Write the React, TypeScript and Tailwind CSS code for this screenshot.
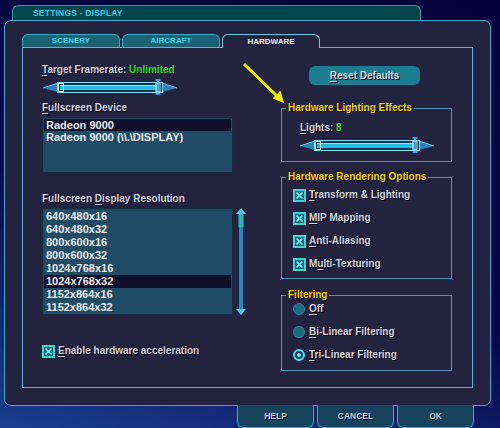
import React from 'react';

const shadow = '[text-shadow:1px_1px_0_#05051a]';

function U({ children }: { children: React.ReactNode }) {
  return <span className="underline underline-offset-[2px]">{children}</span>;
}

function Slider() {
  return (
    <svg width="134" height="16" viewBox="0 0 134 16">
      <polygon points="0,9 15,4 15,13" fill="#2c82b6" />
      <polyline points="0,9 15,4" stroke="#69c6ef" strokeWidth="1" fill="none" />
      <polygon points="134,9 119,4 119,13" fill="#2c82b6" />
      <polyline points="134,9 119,4" stroke="#69c6ef" strokeWidth="1" fill="none" />
      <rect x="14.5" y="3.5" width="105" height="10" fill="#0c3552" stroke="#86e0f2" />
      <rect x="17" y="6" width="99" height="5" fill="#28bedf" />
      <rect x="17" y="6" width="99" height="1" fill="#7fe6f6" />
      <rect x="15.5" y="4.5" width="5" height="8" fill="none" stroke="#c9f6ff" />
      <line x1="115" y1="0" x2="115" y2="16" stroke="#3e9fe6" strokeWidth="2" />
      <rect x="112.5" y="0" width="5" height="2" fill="#3e9fe6" />
      <rect x="112.5" y="14" width="5" height="2" fill="#3e9fe6" />
      <rect x="113" y="4" width="4" height="9" fill="none" stroke="#c9f6ff" />
    </svg>
  );
}

function Check({ children }: { children: React.ReactNode }) {
  return (
    <div className="flex items-center h-[14px] gap-[3px]">
      <span className="w-[13px] h-[13px] border-2 border-[#3fd6d0] bg-[#17607a] flex items-center justify-center">
        <svg width="7" height="7" viewBox="0 0 7 7">
          <path d="M0.5 0.5 L6.5 6.5 M6.5 0.5 L0.5 6.5" stroke="#62f2ea" strokeWidth="1.6" />
        </svg>
      </span>
      <span className={`text-[10px] font-bold leading-[12px] text-[#d4d4dc] ${shadow}`}>{children}</span>
    </div>
  );
}

function Radio({ on, children }: { on?: boolean; children: React.ReactNode }) {
  return (
    <div className="flex items-center h-[14px] gap-[4px]">
      {on ? (
        <span className="w-[12px] h-[12px] rounded-full border-2 border-[#49e3f0] bg-[#123a5a] flex items-center justify-center">
          <span className="w-[4px] h-[4px] rounded-full bg-[#64f2fa]" />
        </span>
      ) : (
        <span className="w-[12px] h-[12px] rounded-full bg-[#1b6a80] border border-[#2c8299]" />
      )}
      <span className={`text-[10px] font-bold leading-[12px] text-[#d4d4dc] ${shadow}`}>{children}</span>
    </div>
  );
}

function Group({ title, className, children }: { title: string; className: string; children: React.ReactNode }) {
  return (
    <div className={`relative border border-[#4e97b4] ${className}`}>
      <span className={`absolute -top-[7px] left-[4px] px-[2px] bg-[#24233f] text-[10px] font-bold leading-[12px] text-[#f2d400] ${shadow}`}>
        {title}
      </span>
      {children}
    </div>
  );
}

export default function App() {
  const resolutions = [
    '640x480x16',
    '640x480x32',
    '800x600x16',
    '800x600x32',
    '1024x768x16',
    '1024x768x32',
    '1152x864x16',
    '1152x864x32',
  ];

  return (
    <div className="relative w-[500px] h-[428px] overflow-hidden pt-[5px] font-['Liberation_Sans',Arial,sans-serif] bg-[linear-gradient(200deg,#04043a_0%,#07074a_55%,#1a3e8e_100%)]">
      {/* title tab */}
      <div className="ml-[12px] w-[409px] h-[15px] rounded-t-[6px] border-t border-x border-[#2a9ab0] bg-[#01464c] pl-[20px] flex items-center">
        <span className="text-[8.5px] font-bold text-[#33cde0] tracking-[0.2px]">SETTINGS - DISPLAY</span>
      </div>

      {/* main panel */}
      <div className="ml-[4px] w-[487px] h-[386px] rounded-[7px] border border-[#3aa8c8] bg-[#24233f] pt-[13px] pl-[17px]">
        <div className="flex gap-[2px] h-[13px]">
          <div className="w-[98px] h-[13px] rounded-t-[6px] border-t border-x border-[#3aa8c0] bg-[#1b6275] flex items-center justify-center">
            <span className="text-[8px] font-bold text-[#3fd0e0]">SCENERY</span>
          </div>
          <div className="w-[98px] h-[13px] rounded-t-[6px] border-t border-x border-[#3aa8c0] bg-[#1b6275] flex items-center justify-center">
            <span className="text-[8px] font-bold text-[#3fd0e0]">AIRCRAFT</span>
          </div>
          <div className="relative z-10 w-[98px] h-[14px] rounded-t-[6px] border-t border-x border-[#6cc8e0] bg-[#24233f] flex items-center justify-center">
            <span className="text-[8px] font-bold text-[#eeeef4]">HARDWARE</span>
          </div>
        </div>

        {/* tab content */}
        <div className="w-[451px] h-[341px] border border-[#55b8d8] flex pl-[19px]">
          {/* left column */}
          <div className="w-[214px] flex flex-col">
            <div className={`mt-[16px] text-[10px] font-bold leading-[12px] text-[#d4d4dc] ${shadow}`}>
              <U>T</U>arget Framerate: <span className="text-[#1fe31f]">Unlimited</span>
            </div>
            <div className="mt-[3px] ml-[1px] h-[16px]">
              <Slider />
            </div>
            <div className={`mt-[7px] text-[10px] font-bold leading-[12px] text-[#d4d4dc] ${shadow}`}>
              <U>F</U>ullscreen Device
            </div>
            <div className="mt-[3px] w-[191px] h-[56px] border border-[#142d40] bg-[#1f4b64] pt-[1px] text-[11px] font-bold leading-[12px] text-[#ececf2]">
              <div className="mx-[1px] px-[2px] bg-[#0f0f2c]">Radeon 9000</div>
              <div className="px-[3px]">{'Radeon 9000 (\\\\.\\DISPLAY)'}</div>
            </div>
            <div className={`mt-[20px] text-[10px] font-bold leading-[12px] text-[#d4d4dc] ${shadow}`}>
              Fullscreen <U>D</U>isplay Resolution
            </div>
            <div className="mt-[3px] flex">
              <div className="w-[191px] h-[107px] border border-[#142d40] bg-[#1f4b64] pt-[1px] text-[11px] font-bold leading-[13px] text-[#ececf2]">
                {resolutions.map((r) => (
                  <div key={r} className={r === '1024x768x32' ? 'mx-[1px] px-[2px] bg-[#0f0f2c]' : 'px-[3px]'}>
                    {r}
                  </div>
                ))}
              </div>
              <svg className="ml-[3px]" width="10" height="107" viewBox="0 0 10 107">
                <rect x="3" y="6" width="4" height="95" fill="#1d8cc4" />
                <rect x="2.5" y="5" width="5" height="14" fill="#2fb2b8" />
                <polygon points="5,0 10,6 0,6" fill="#4fc8f0" />
                <polygon points="0,101 10,101 5,107" fill="#4fc8f0" />
              </svg>
            </div>
            <div className="mt-[29px]">
              <Check>
                <U>E</U>nable hardware acceleration
              </Check>
            </div>
          </div>

          {/* right column */}
          <div className="ml-[25px] w-[171px] flex flex-col">
            <div className="mt-[18px] ml-[28px] w-[111px] h-[19px] rounded-[6px] bg-[#1b7d8f] flex items-center justify-center">
              <span className={`text-[10px] font-bold text-[#d8dce2] ${shadow}`}>
                <U>R</U>eset Defaults
              </span>
            </div>

            <Group title="Hardware Lighting Effects" className="mt-[23px] h-[54px] pt-[13px] pl-[18px]">
              <div className={`text-[10px] font-bold leading-[12px] text-[#d4d4dc] ${shadow}`}>
                <U>L</U>ights: <span className="text-[#1fe31f]">8</span>
              </div>
              <div className="mt-[3px] h-[16px]">
                <Slider />
              </div>
            </Group>

            <Group title="Hardware Rendering Options" className="mt-[15px] h-[102px] pt-[10px] pl-[11px] flex flex-col gap-[9px]">
              <Check>
                <U>T</U>ransform &amp; Lighting
              </Check>
              <Check>
                <U>M</U>IP Mapping
              </Check>
              <Check>
                <U>A</U>nti-Aliasing
              </Check>
              <Check>
                M<U>u</U>lti-Texturing
              </Check>
            </Group>

            <Group title="Filtering" className="mt-[16px] h-[76px] pt-[6px] pl-[11px] flex flex-col gap-[9px]">
              <Radio>
                <U>O</U>ff
              </Radio>
              <Radio>
                <U>B</U>i-Linear Filtering
              </Radio>
              <Radio on>
                <U>T</U>ri-Linear Filtering
              </Radio>
            </Group>
          </div>
        </div>
      </div>

      {/* bottom buttons */}
      <div className="ml-[237px] flex gap-[3px] -mt-[1px]">
        {['HELP', 'CANCEL', 'OK'].map((b) => (
          <div
            key={b}
            className="w-[77px] h-[23px] rounded-b-[6px] border-x border-b border-[#3aa8c8] bg-[#17445c] flex items-center justify-center"
          >
            <span className={`text-[8.5px] font-bold text-[#c8d0da] ${shadow}`}>{b}</span>
          </div>
        ))}
      </div>

      {/* annotation arrow */}
      <svg className="absolute left-0 top-0 pointer-events-none" width="500" height="428" viewBox="0 0 500 428">
        <line x1="244" y1="64" x2="277" y2="96" stroke="#f5f000" strokeWidth="3" />
        <polygon points="284,103 272.5,98.5 280.5,90.5" fill="#f5f000" />
      </svg>
    </div>
  );
}
